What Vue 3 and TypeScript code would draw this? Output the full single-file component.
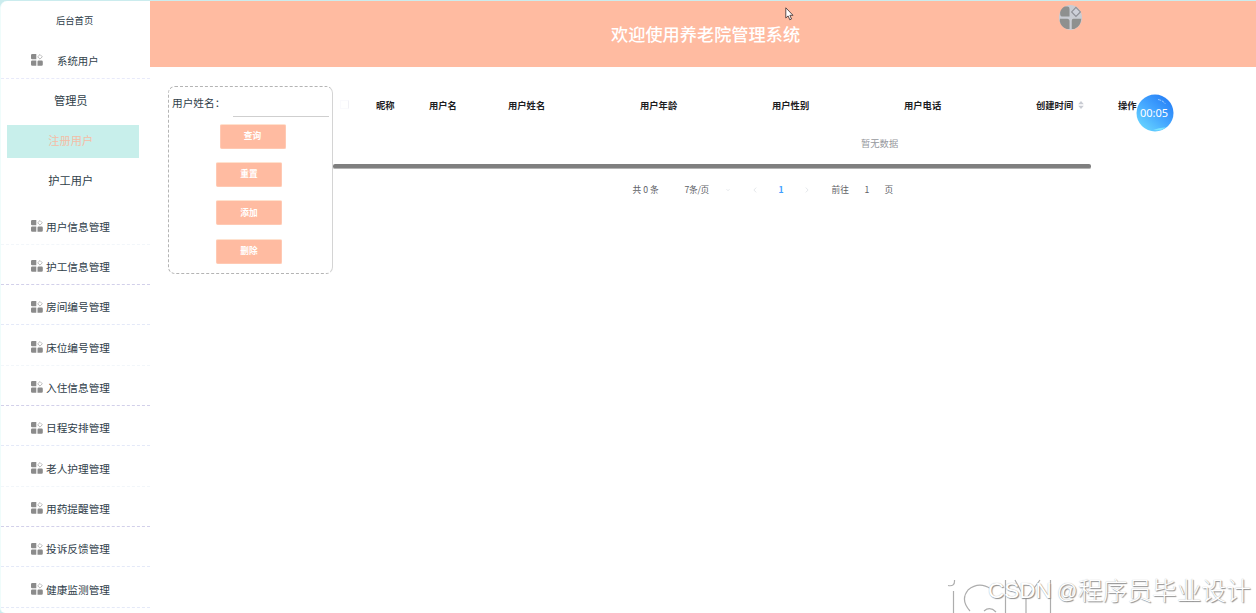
<script setup lang="ts">
interface Column {
  label: string
  sortable?: boolean
}

const menus: { label: string; tone: string }[] = [
  { label: '用户信息管理', tone: 'faint' },
  { label: '护工信息管理', tone: 'strong' },
  { label: '房间编号管理', tone: 'soft' },
  { label: '床位编号管理', tone: 'faint' },
  { label: '入住信息管理', tone: 'strong' },
  { label: '日程安排管理', tone: 'soft' },
  { label: '老人护理管理', tone: 'faint' },
  { label: '用药提醒管理', tone: 'strong' },
  { label: '投诉反馈管理', tone: 'soft' },
  { label: '健康监测管理', tone: 'soft' },
]

const submenus: string[] = ['管理员', '注册用户', '护工用户']
const activeSub = '注册用户'

const columns: Column[] = [
  { label: '昵称' },
  { label: '用户名' },
  { label: '用户姓名' },
  { label: '用户年龄' },
  { label: '用户性别' },
  { label: '用户电话' },
  { label: '创建时间', sortable: true },
  { label: '操作' },
]

const actions: string[] = ['查询', '重置', '添加', '删除']
</script>

<template>
  <div class="page">
    <aside class="sidebar">
      <div class="home">后台首页</div>
      <div class="group">
        <svg class="grid-icon" viewBox="0 0 12 12">
          <path d="M1.2 0H5.3V5.3H1.2Q0 5.300 0 4.200V1.2Q0 0 1.2 0ZM1.200 6.5H5.3V11.8H1.2Q0 11.8 0 10.6V7.700Q0 6.500 1.200 6.500ZM7.6 6.5H10.6Q11.8 6.5 11.8 7.7V10.600Q11.800 11.800 10.600 11.8H6.5V7.6Q6.5 6.5 7.6 6.5Z" fill="#8b8b8b" />
          <path d="M9 .5L11.3 2.8L9 5.1L6.7 2.8Z" fill="#fff" stroke="#a8a8a8" stroke-width=".8" />
        </svg>
        <span>系统用户</span>
      </div>
      <ul class="subs">
        <li v-for="s in submenus" :key="s" :class="{ active: s === activeSub }">{{ s }}</li>
      </ul>
      <div v-for="m in menus" :key="m.label" class="item" :class="m.tone">
        <svg class="grid-icon" viewBox="0 0 12 12">
          <path d="M1.2 0H5.3V5.3H1.2Q0 5.300 0 4.200V1.2Q0 0 1.2 0ZM1.200 6.5H5.3V11.8H1.2Q0 11.8 0 10.6V7.700Q0 6.500 1.200 6.500ZM7.6 6.5H10.6Q11.8 6.5 11.8 7.7V10.600Q11.800 11.800 10.600 11.8H6.5V7.6Q6.5 6.5 7.6 6.5Z" fill="#8b8b8b" />
          <path d="M9 .5L11.3 2.8L9 5.1L6.7 2.8Z" fill="#fff" stroke="#a8a8a8" stroke-width=".8" />
        </svg>
        <span>{{ m.label }}</span>
      </div>
    </aside>

    <div class="main">
      <header class="banner">
        <h1>欢迎使用养老院管理系统</h1>
        <svg class="avatar" viewBox="0 0 24 26">
          <ellipse cx="12" cy="13" rx="12" ry="13" fill="#c9ccd3" />
          <path d="M6 1.5H8.8Q11 1.5 11 4V12H4Q1.2 12 1.2 9V7.5Q2 3.5 6 1.5ZM1 14.3H8.5Q11 14.3 11 17V25H8Q2 23 .8 17ZM15 14.3H23.2Q23 22 16 25H13.3V16.5Q13.3 14.3 15 14.3Z" fill="#8e908f" />
          <path d="M17.7 2.5L22.3 7.2L17.7 11.8L13.2 7.2Z" fill="#cdd0d9" stroke="#8e9097" stroke-width="1.2" />
        </svg>
      </header>

      <div class="content">
        <section class="search">
          <div class="field">
            <label>用户姓名：</label>
            <span class="input"></span>
          </div>
          <button v-for="a in actions" :key="a" type="button">{{ a }}</button>
        </section>

        <section class="list">
          <div class="thead">
            <i class="check"></i>
            <div v-for="c in columns" :key="c.label" class="th">
              <span>{{ c.label }}</span>
              <svg v-if="c.sortable" class="sort" viewBox="0 0 6 8">
                <path d="M3 0L5.8 3.2H.2ZM3 8L5.8 4.8H.2Z" fill="#c9ccd3" />
              </svg>
            </div>
          </div>
          <div class="empty">暂无数据</div>
          <div class="scroll"></div>
          <div class="pager">
            <span class="total">共 0 条</span>
            <span class="size">7条/页</span>
            <svg class="down" viewBox="0 0 4 6"><path d="M.5 2.2L2 3.7L3.5 2.2" /></svg>
            <svg class="prev" viewBox="0 0 4 6"><path d="M3.2 .6L.9 3L3.2 5.4" /></svg>
            <b class="current">1</b>
            <svg class="next" viewBox="0 0 4 6"><path d="M.8 .6L3.1 3L.8 5.4" /></svg>
            <span class="goto">前往</span>
            <span class="num">1</span>
            <span>页</span>
          </div>
        </section>
      </div>
    </div>

    <div class="timer">
      <svg viewBox="0 0 38 38">
        <defs>
          <linearGradient id="ball" x1=".15" y1=".9" x2=".8" y2=".15">
            <stop offset="0" stop-color="#65d2ff" />
            <stop offset=".55" stop-color="#43a5ff" />
            <stop offset="1" stop-color="#2b86f8" />
          </linearGradient>
        </defs>
        <circle cx="19" cy="19" r="18.5" fill="url(#ball)" />
        <path d="M22 5.5Q27 6.5 29.5 10" fill="none" stroke="#b5dcff" stroke-width=".8" stroke-dasharray="3 1" />
        <path d="M17 36Q24 33 30 33.5Q25 37.5 17 36Z" fill="#79e3ff" />
      </svg>
      <span>00:05</span>
    </div>

    <svg class="pointer" viewBox="0 0 10 14">
      <path d="M.8 .8V11L3.1 8.9L4.8 12.8L6.5 12L4.9 8.3H8Z" fill="#fff" stroke="#4c3b3b" stroke-width=".9" />
    </svg>

    <svg class="logo-mark" viewBox="0 0 110 36">
      <g fill="none" stroke="#adadad" stroke-width="1.2">
        <path d="M2 7.500Q9 9 8.500 2M7.500 13V36M24 33Q14 22 22 12Q33 3 45 11M38 33Q44 28 50 34" />
        <path d="M59.500 2V36M69 2L78 19M94 2L80 21V36M104.500 2V36" />
      </g>
    </svg>
    <div class="watermark"><span class="latin">CSDN</span><span class="at">@</span><span class="author">程序员毕业设计</span></div>
  </div>
</template>

<style>
body {
  overflow: hidden;
}
</style>

<style scoped>
.page {
  position: relative;
  box-sizing: border-box;
  display: flex;
  width: 1256px;
  height: 613px;
  padding-top: 1px;
  overflow: hidden;
  background: #cbecee;
  font-family: "Noto Sans CJK SC", "Noto Sans", sans-serif;
  color: #2f3e4a;
}
.sidebar {
  flex: none;
  box-sizing: border-box;
  width: 149.5px;
  height: 612px;
  border-left: 1px solid #effcfb;
  border-radius: 7px 0 0 5px;
  background: #fff;
  overflow: hidden;
}
.home {
  height: 38px;
  padding-left: 55px;
  font-size: 9.3px;
  line-height: 38px;
}
.group {
  display: flex;
  align-items: center;
  gap: 14px;
  box-sizing: border-box;
  height: 40px;
  padding: 3px 0 0 30px;
  border-bottom: 1px dashed #e8eafa;
  font-size: 10.4px;
}
.grid-icon {
  flex: none;
  width: 12px;
  height: 12px;
}
.subs {
  margin: 0;
  padding: 6px 11px 0 6px;
  height: 125.4px;
  box-sizing: border-box;
  list-style: none;
  font-size: 11.2px;
}
.subs li {
  height: 33px;
  margin-bottom: 7px;
  padding-right: 4px;
  line-height: 31px;
  text-align: center;
}
.subs .active {
  background: #c8efeb;
  color: #f4bda6;
}
.item {
  display: flex;
  align-items: center;
  gap: 3px;
  box-sizing: border-box;
  height: 40.35px;
  padding: 4px 0 0 30px;
  border-bottom: 1px dashed;
  font-size: 10.67px;
}
.item .grid-icon {
  margin-top: 0;
}
.faint {
  border-color: #f2f6fa;
}
.soft {
  border-color: #e4e9f8;
}
.strong {
  border-color: #d2d0ea;
}
.main {
  flex: 1;
  background: #fff;
}
.banner {
  display: flex;
  height: 66px;
  background: #ffbba1;
}
.banner h1 {
  margin: 0;
  padding-left: 461.5px;
  width: 447.5px;
  color: #fff;
  font-size: 17.2px;
  font-weight: 500;
  line-height: 66px;
}
.avatar {
  width: 23px;
  height: 25px;
  margin-top: 4px;
}
.content {
  display: flex;
  align-items: flex-start;
  padding: 19px 0 0 18.5px;
}
.search {
  box-sizing: border-box;
  display: flex;
  flex-direction: column;
  align-items: center;
  width: 165px;
  height: 188px;
  padding-right: 3px;
  border: 1px dashed #b4b4b4;
  border-right: 1px solid #d4d4d4;
  border-radius: 7px;
}
.field {
  display: flex;
  align-self: stretch;
  height: 30px;
  margin-bottom: 6.5px;
  padding-left: 3px;
  font-size: 10.67px;
  line-height: 31px;
}
.field label {
  width: 61px;
  white-space: nowrap;
}
.input {
  width: 96px;
  border-bottom: 1px solid #cfcfcf;
}
.search button {
  flex: none;
  box-sizing: border-box;
  width: 66px;
  height: 25px;
  margin: 0 0 13.4px;
  padding: 0;
  border: 1px solid #ffc9b3;
  border-top-color: #ffe2cf;
  border-radius: 2px;
  background: #ffbba1;
  color: #fff;
  font: bold 8.7px/22px "Noto Sans CJK SC", sans-serif;
}
.search .field + button {
  margin-left: 7px;
}
.list {
  width: 922px;
}
.thead {
  display: grid;
  grid-template-columns: 43px 53px 79px 132px 132px 132px 132px 82px 60px;
  align-items: center;
  height: 37px;
  color: #1d1d1f;
  font-size: 9.3px;
  font-weight: 700;
}
.check {
  box-sizing: border-box;
  width: 9px;
  height: 9px;
  margin-left: 7px;
  border: 1px solid #fafafd;
  border-right-color: #f1f1f6;
  border-radius: 1px;
}
.th {
  display: flex;
  align-items: center;
}
.sort {
  width: 6px;
  height: 8px;
  margin-left: 5px;
}
.empty {
  height: 41px;
  padding-left: 528px;
  color: #96989d;
  font-size: 9.3px;
  line-height: 41px;
}
.scroll {
  box-sizing: border-box;
  width: 758px;
  height: 5px;
  border-bottom: 1px solid #b4b4b4;
  border-radius: 2px;
  background: #7f7f7f;
}
.pager {
  display: flex;
  align-items: center;
  height: 41px;
  padding-left: 299.5px;
  color: #606266;
  font-size: 8.7px;
  white-space: nowrap;
}
.pager svg {
  width: 4px;
  height: 6px;
  fill: none;
  stroke: #d3d6dd;
  stroke-width: .6;
}
.total {
  width: 52px;
}
.size {
  width: 41px;
  letter-spacing: -.3px;
}
.pager .prev {
  margin-left: 23px;
}
.current {
  width: 5px;
  margin: 0 21px 0 22px;
  color: #409eff;
}
.goto {
  width: 33px;
  margin-left: 23px;
}
.num {
  width: 20px;
}
.timer {
  position: absolute;
  top: 94px;
  left: 1136px;
  width: 38px;
  height: 38px;
  color: #fff;
  font: 11px/38px "Noto Sans", sans-serif;
  text-align: center;
}
.timer svg {
  position: absolute;
  inset: 0;
}
.timer span {
  position: relative;
  left: -1px;
}
.pointer {
  position: absolute;
  top: 7px;
  left: 785px;
  width: 10px;
  height: 14px;
}
.logo-mark {
  position: absolute;
  top: 578px;
  left: 946px;
  width: 110px;
  height: 36px;
}
.watermark {
  position: absolute;
  top: 573px;
  left: 988px;
  display: flex;
  color: #fff;
  font-size: 24.7px;
  font-weight: 300;
  line-height: 36px;
  white-space: nowrap;
  text-shadow: 1px 1px 1px #8c8c8c, 0 0 1px #b0b0b0;
}
.latin {
  width: 69px;
  font-family: "Liberation Sans", sans-serif;
  font-size: 22.5px;
}
.at {
  width: 21px;
  font-family: "Liberation Sans", sans-serif;
  font-size: 20px;
}
.author {
  line-height: 33px;
}
</style>
